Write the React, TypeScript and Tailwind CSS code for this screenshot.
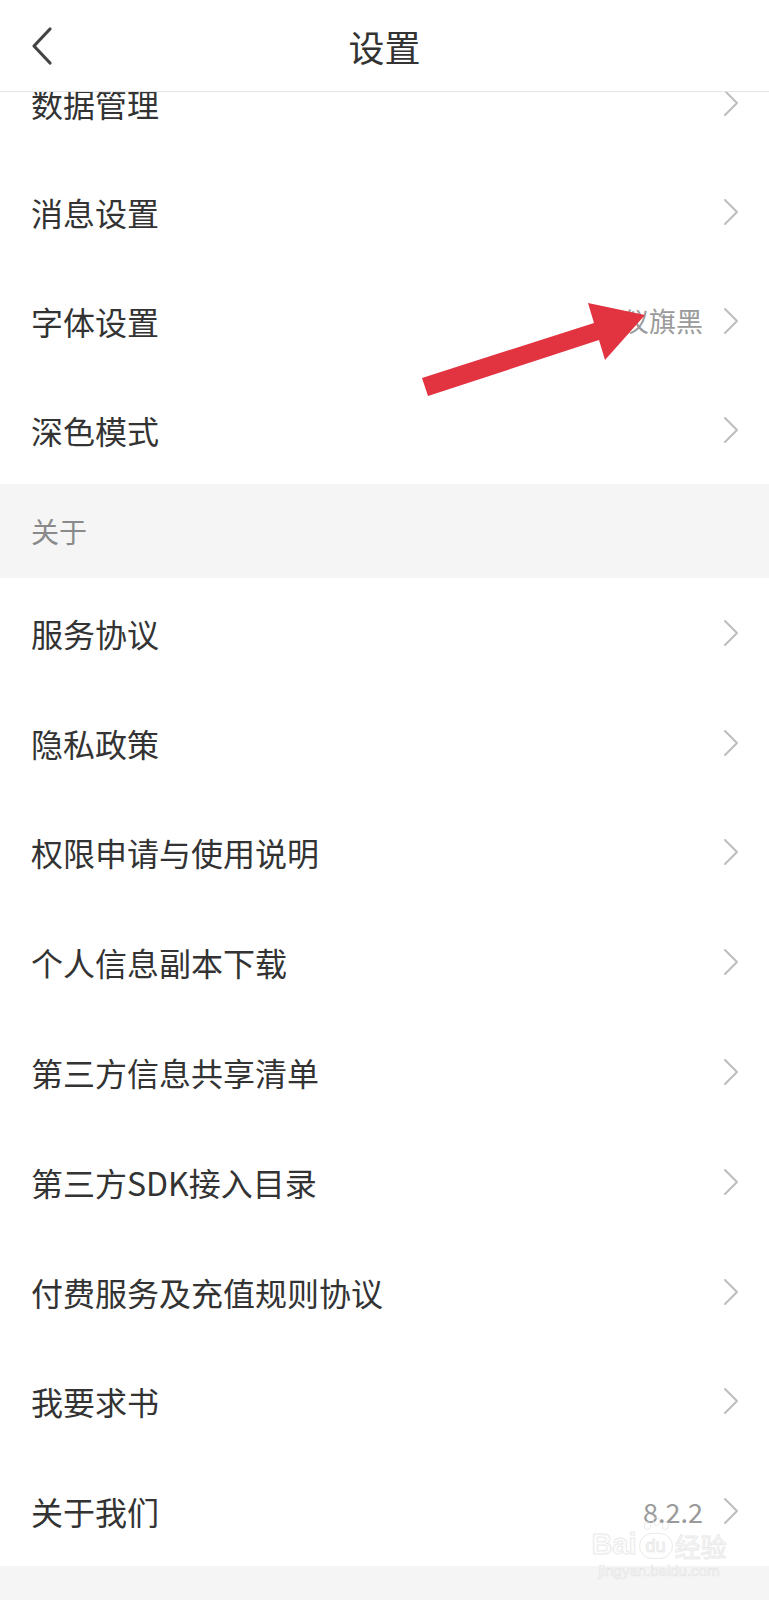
import React from 'react'

type Row = { label: string; value?: string }

const topRows: Row[] = [
  { label: '数据管理' },
  { label: '消息设置' },
  { label: '字体设置', value: '汉仪旗黑' },
  { label: '深色模式' },
]

const aboutRows: Row[] = [
  { label: '服务协议' },
  { label: '隐私政策' },
  { label: '权限申请与使用说明' },
  { label: '个人信息副本下载' },
  { label: '第三方信息共享清单' },
  { label: '第三方SDK接入目录' },
  { label: '付费服务及充值规则协议' },
  { label: '我要求书' },
  { label: '关于我们', value: '8.2.2' },
]

const Chevron = () => (
  <svg width="16" height="28" viewBox="0 0 16 28" fill="none">
    <path d="M2 2 L14 14 L2 26" stroke="#bdbdbd" strokeWidth="2" strokeLinecap="round" strokeLinejoin="round" />
  </svg>
)

const SettingRow = ({ row, h }: { row: Row; h: string }) => (
  <div className={`flex items-center justify-between pl-[31px] pr-[30px] ${h}`}>
    <span className="text-[32px] text-[#333333] leading-none">{row.label}</span>
    <div className="flex items-center gap-[20px]">
      {row.value && <span className="text-[27px] text-[#9a9a9a] leading-none">{row.value}</span>}
      <Chevron />
    </div>
  </div>
)

const App = () => {
  return (
    <div
      className="relative w-[769px] h-[1600px] overflow-hidden bg-white flex flex-col"
      style={{ fontFamily: '"Noto Sans CJK SC", "Noto Sans", sans-serif' }}
    >
      {/* header */}
      <div className="h-[92px] shrink-0 grid grid-cols-[1fr_auto_1fr] items-center border-b border-[#e6e6e6] bg-white">
        <div className="pl-[30px] flex items-center">
          <svg width="24" height="40" viewBox="0 0 24 40" fill="none">
            <path d="M20 3 L4 20 L20 37" stroke="#444444" strokeWidth="3.2" strokeLinecap="round" strokeLinejoin="round" />
          </svg>
        </div>
        <div className="text-[36px] text-[#333333] leading-none">设置</div>
        <div />
      </div>

      {/* scrolled list */}
      <div className="flex-1 overflow-hidden">
        <div className="-mt-[44px] flex flex-col">
          {topRows.map((r) => (
            <SettingRow key={r.label} row={r} h="h-[109px]" />
          ))}
          <div className="h-[94px] bg-[#f5f5f5] flex items-center pl-[31px]">
            <span className="text-[28px] text-[#8a8a8a] leading-none">关于</span>
          </div>
          {aboutRows.map((r) => (
            <SettingRow key={r.label} row={r} h="h-[109.8px]" />
          ))}
          <div className="h-[36px] bg-[#f5f5f5] border-b-2 border-[#e2e2e2]" />
        </div>
      </div>

      {/* red annotation arrow */}
      <svg className="absolute left-0 top-0 pointer-events-none" width="769" height="600" viewBox="0 0 769 600">
        <polygon
          points="422,378 594,323 588,303 645,315 605,360 599,340 428,396"
          fill="#e13440"
        />
      </svg>

      {/* watermark */}
      <div className="absolute left-[588px] top-[1530px] w-[142px] flex flex-col items-center pointer-events-none select-none opacity-70">
        <div className="flex items-end leading-none text-[#fbfbfb] [-webkit-text-stroke:1px_#e2e2e2]">
          <span className="text-[29px] font-bold" style={{ fontFamily: '"Liberation Sans", sans-serif' }}>Bai</span>
          <span className="relative mx-[2px] w-[34px] h-[26px] rounded-full border border-[#e2e2e2] flex items-center justify-center text-[18px]" style={{ fontFamily: '"Liberation Sans", sans-serif' }}>
            du
            <span className="absolute -top-[13px] left-[4px] w-[7px] h-[9px] rounded-full border border-[#e2e2e2]" />
            <span className="absolute -top-[17px] left-[13px] w-[7px] h-[9px] rounded-full border border-[#e2e2e2]" />
            <span className="absolute -top-[13px] left-[22px] w-[7px] h-[9px] rounded-full border border-[#e2e2e2]" />
          </span>
          <span className="text-[26px]">经验</span>
        </div>
        <span className="mt-[4px] text-[15px] leading-none text-[#fbfbfb] [-webkit-text-stroke:0.6px_#dedede]" style={{ fontFamily: '"Liberation Sans", sans-serif' }}>
          jingyan.baidu.com
        </span>
      </div>
    </div>
  )
}

export default App
